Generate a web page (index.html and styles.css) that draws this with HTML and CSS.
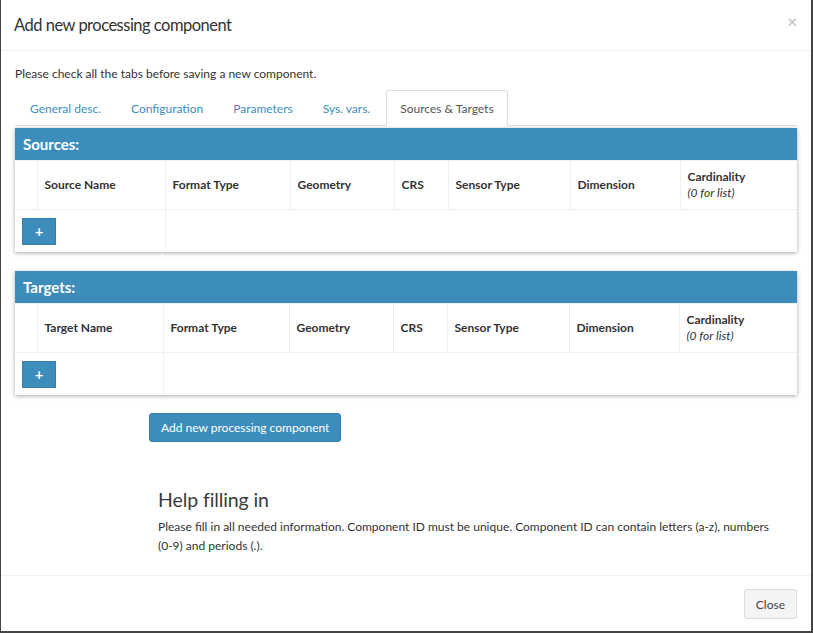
FILE: index.html
```html
<!DOCTYPE html>
<html>
<head>
<meta charset="utf-8">
<link rel="stylesheet" href="styles.css">
</head>
<body>
<div class="modal">
  <div class="modal-header">
    <h4 class="modal-title">Add new processing component</h4>
    <span class="close">×</span>
  </div>
  <div class="modal-body">
    <p class="intro">Please check all the tabs before saving a new component.</p>
    <ul class="nav-tabs">
      <li><a>General desc.</a></li>
      <li><a>Configuration</a></li>
      <li><a>Parameters</a></li>
      <li><a>Sys. vars.</a></li>
      <li class="active"><a>Sources &amp; Targets</a></li>
    </ul>
    <div class="tab-content">
      <div class="box">
        <div class="box-header">Sources:</div>
        <table class="grid">
          <colgroup>
            <col class="c0"><col class="c1"><col class="c2"><col class="c3"><col class="c4"><col class="c5"><col class="c6"><col class="c7">
          </colgroup>
          <thead>
            <tr>
              <th></th>
              <th>Source Name</th>
              <th>Format Type</th>
              <th>Geometry</th>
              <th>CRS</th>
              <th>Sensor Type</th>
              <th>Dimension</th>
              <th>Cardinality<br><em>(0 for list)</em></th>
            </tr>
          </thead>
          <tbody>
            <tr>
              <td colspan="2"><button class="btn-add">+</button></td>
              <td colspan="6"></td>
            </tr>
          </tbody>
        </table>
      </div>
      <div class="box">
        <div class="box-header">Targets:</div>
        <table class="grid">
          <colgroup>
            <col class="c0"><col class="c1 t"><col class="c2 t"><col class="c3"><col class="c4 t"><col class="c5 t"><col class="c6"><col class="c7">
          </colgroup>
          <thead>
            <tr>
              <th></th>
              <th>Target Name</th>
              <th>Format Type</th>
              <th>Geometry</th>
              <th>CRS</th>
              <th>Sensor Type</th>
              <th>Dimension</th>
              <th>Cardinality<br><em>(0 for list)</em></th>
            </tr>
          </thead>
          <tbody>
            <tr>
              <td colspan="2"><button class="btn-add">+</button></td>
              <td colspan="6"></td>
            </tr>
          </tbody>
        </table>
      </div>
      <div class="submit-row">
        <button class="btn-primary">Add new processing component</button>
      </div>
      <div class="help">
        <h4>Help filling in</h4>
        <p>Please fill in all needed information. Component ID must be unique. Component ID can contain letters (a-z), numbers (0-9) and periods (.).</p>
      </div>
    </div>
  </div>
  <div class="modal-footer">
    <button class="btn-default">Close</button>
  </div>
</div>
</body>
</html>
```
FILE: styles.css
```css
* { box-sizing: border-box; }
html, body { margin: 0; padding: 0; }
body {
  background: #454545;
  font-family: "Source Sans Pro", "Lato", "Open Sans", sans-serif;
  font-size: 12px;
  color: #333;
  height: 633px;
  overflow: hidden;
}
.modal {
  margin-left: 1px;
  width: 810px;
  height: 631px;
  background: #fff;
  display: flex;
  flex-direction: column;
}
.modal-header {
  height: 51px;
  flex: none;
  border-bottom: 1px solid #f0f0f0;
  padding: 0 15px 0 13px;
  display: flex;
  align-items: center;
  justify-content: space-between;
}
.modal-title {
  margin: 0;
  font-size: 16.5px;
  letter-spacing: -0.5px;
  font-weight: 400;
  color: #333;
}
.close {
  font-size: 17px;
  font-weight: 700;
  color: #c8c8c8;
  margin-top: -8px;
  margin-right: -1px;
}
.modal-body {
  flex: 1;
  padding: 14px 14px 0 14px;
}
.intro {
  margin: 0 0 8px 0;
  line-height: 17px;
}
.nav-tabs {
  list-style: none;
  margin: 0;
  padding: 0;
  display: flex;
  border-bottom: 1px solid #ddd;
}
.nav-tabs li {
  margin-right: 2px;
  margin-bottom: -1px;
}
.nav-tabs a {
  display: block;
  padding: 9px 13px 8px;
  line-height: 17px;
  color: #3c8dbc;
  border: 1px solid transparent;
  border-radius: 3px 3px 0 0;
}
.nav-tabs li:first-child a { padding-left: 14px; }
.nav-tabs .active a {
  color: #555;
  background: #fff;
  border-color: #ddd #ddd transparent #ddd;
}
.tab-content {
  padding-top: 2px;
}
.box {
  background: #fff;
  box-shadow: 0 1px 4px rgba(0, 0, 0, 0.35);
  margin-bottom: 19px;
}
.box-header {
  background: #3c8dbc;
  color: #fff;
  font-weight: 700;
  font-size: 15px;
  height: 32px;
  line-height: 32px;
  padding-left: 8px;
}
.grid {
  width: 100%;
  border-collapse: collapse;
  table-layout: fixed;
}
.c0 { width: 22px; }
.c1 { width: 128px; }
.c1.t { width: 126px; }
.c2 { width: 125px; }
.c2.t { width: 126px; }
.c3 { width: 104px; }
.c4 { width: 54px; }
.c5 { width: 122px; }
.c6 { width: 110px; }
.grid th, .grid td {
  border: 1px solid #f0f0f0;
  padding: 8px 7px;
  text-align: left;
  vertical-align: middle;
  font-size: 12px;
  line-height: 16px;
}
.grid td { padding-bottom: 7px; }
.grid th { font-weight: 700; color: #333; height: 48px; }
.grid th em { font-weight: 400; }
.grid tr > *:first-child { border-left: none; }
.grid tr > *:last-child { border-right: none; }
.grid tbody td { border-bottom: none; }
.btn-add {
  display: block;
  width: 34px;
  height: 27px;
  background: #3c8dbc;
  border: 1px solid #367fa9;
  color: #fff;
  font-family: inherit;
  font-weight: 700;
  font-size: 15px;
  line-height: 1;
  padding: 0;
  border-radius: 0;
}
.submit-row {
  margin-top: -1px;
  padding-left: 134px;
}
.btn-primary {
  background: #3c8dbc;
  border: 1px solid #367fa9;
  border-radius: 3px;
  color: #fff;
  font-family: inherit;
  font-size: 12px;
  height: 29px;
  padding: 0 11px;
}
.help {
  margin-top: 46px;
  padding-left: 143px;
  padding-right: 24px;
}
.help h4 {
  margin: 0 0 5px 0;
  font-size: 19.5px;
  font-weight: 400;
  line-height: 24px;
  letter-spacing: -0.1px;
  color: #3a3a3a;
}
.help p {
  margin: 0;
  line-height: 19px;
}
.modal-footer {
  flex: none;
  height: 56px;
  border-top: 1px solid #f0f0f0;
  padding: 13px 14px 0;
  display: flex;
  justify-content: flex-end;
}
.btn-default {
  height: 30px;
  padding: 0 11px;
  background: #f4f4f4;
  border: 1px solid #ddd;
  border-radius: 3px;
  color: #444;
  font-family: inherit;
  font-size: 12px;
}
```
